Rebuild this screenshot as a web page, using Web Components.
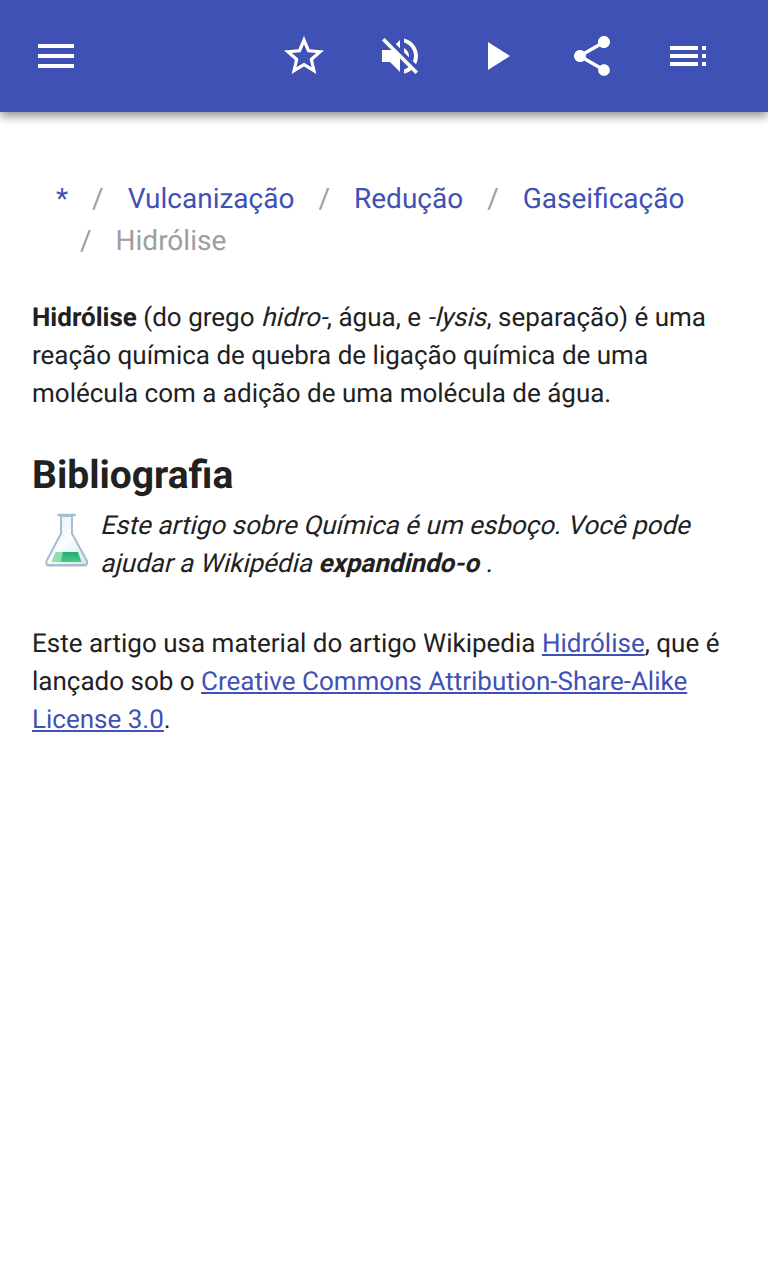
<!DOCTYPE html>
<html lang="pt">
<head>
<meta charset="utf-8">
<title>Hidrólise</title>
<style>
  html, body { margin: 0; background: #fff; }
  body { font-family: Roboto, "Noto Sans", sans-serif; color: #212121; text-rendering: geometricPrecision; }
  b { font-weight: 700; }
</style>
</head>
<body>
<app-page>
  <app-bar>
    <bar-icon slot="start" name="menu"></bar-icon>
    <bar-icon name="star"></bar-icon>
    <bar-icon name="mute"></bar-icon>
    <bar-icon name="play"></bar-icon>
    <bar-icon name="share"></bar-icon>
    <bar-icon name="queue"></bar-icon>
  </app-bar>
  <article-body>
    <bread-crumbs>
      <crumb-item>*</crumb-item>
      <crumb-item>Vulcanização</crumb-item>
      <crumb-item>Redução</crumb-item>
      <crumb-item>Gaseificação</crumb-item>
      <crumb-item active>Hidrólise</crumb-item>
    </bread-crumbs>
    <text-para><b>Hidrólise</b> (do grego <slant-text>hidro-</slant-text>, água, e <slant-text>-lysis</slant-text>, separação) é uma reação química de quebra de ligação química de uma molécula com a adição de uma molécula de água.</text-para>
    <section-title>Bibliografia</section-title>
    <stub-note><slant-text>Este artigo sobre Química é um esboço. Você pode</slant-text> <slant-text>ajudar a Wikipédia <b>expandindo-o</b> .</slant-text></stub-note>
    <text-para>Este artigo usa material do artigo Wikipedia <text-link>Hidrólise</text-link>, que é lançado sob o <text-link>Creative Commons Attribution-Share-Alike License 3.0</text-link>.</text-para>
  </article-body>
</app-page>

<script>
const ICONS = {
  menu: `<path d="M3 18h18v-2H3v2zm0-5h18v-2H3v2zm0-7v2h18V6H3z"/>`,
  star: `<path d="M22 9.24l-7.19-.62L12 2 9.19 8.63 2 9.24l5.46 4.73L5.82 21 12 17.27 18.18 21l-1.63-7.03L22 9.24zM12 15.4l-3.76 2.27 1-4.28-3.32-2.88 4.38-.38L12 6.1l1.71 4.04 4.38.38-3.32 2.88 1 4.28L12 15.4z"/>`,
  mute: `<path d="M16.5 12c0-1.77-1.02-3.29-2.5-4.03v2.21l2.45 2.45c.03-.2.05-.41.05-.63zm2.5 0c0 .94-.2 1.82-.54 2.64l1.51 1.51C20.63 14.91 21 13.5 21 12c0-4.28-2.99-7.86-7-8.77v2.06c2.89.86 5 3.54 5 6.71zM4.27 3L3 4.27 7.73 9H3v6h4l5 5v-6.73l4.25 4.25c-.67.52-1.42.93-2.25 1.18v2.06c1.38-.31 2.63-.95 3.69-1.81L19.73 21 21 19.73l-9-9L4.27 3zM12 4L9.91 6.09 12 8.18V4z"/>`,
  play: `<path d="M8 5v14l11-7z"/>`,
  share: `<path d="M18 16.08c-.76 0-1.44.3-1.96.77L8.91 12.7c.05-.23.09-.46.09-.7s-.04-.47-.09-.7l7.05-4.11c.54.5 1.25.81 2.04.81 1.66 0 3-1.34 3-3s-1.34-3-3-3-3 1.34-3 3c0 .24.04.47.09.7L8.04 9.81C7.5 9.31 6.79 9 6 9c-1.66 0-3 1.34-3 3s1.34 3 3 3c.79 0 1.5-.31 2.04-.81l7.12 4.16c-.05.21-.08.43-.08.65 0 1.61 1.31 2.92 2.92 2.92s2.92-1.31 2.92-2.92-1.31-2.92-2.92-2.92z"/>`,
  queue: `<path d="M3 7h14v2H3zM3 11h14v2H3zM3 15h14v2H3zM19 7h2v2h-2zM19 11h2v2h-2zM19 15h2v2h-2z"/>`
};

class AppPage extends HTMLElement {
  constructor() {
    super();
    this.attachShadow({ mode: "open" }).innerHTML = `
      <style>
        :host { display: flex; flex-direction: column; min-height: 1280px; background: #fff; }
      </style>
      <slot></slot>`;
  }
}

class AppBar extends HTMLElement {
  constructor() {
    super();
    this.attachShadow({ mode: "open" }).innerHTML = `
      <style>
        :host {
          display: flex;
          align-items: center;
          justify-content: space-between;
          height: 112px;
          padding: 0 32px 0 8px;
          background: #3f51b5;
          box-shadow: 0 4px 10px rgba(0, 0, 0, 0.45);
        }
        .actions { display: flex; }
      </style>
      <slot name="start"></slot>
      <div class="actions"><slot></slot></div>`;
  }
}

class BarIcon extends HTMLElement {
  constructor() {
    super();
    this.attachShadow({ mode: "open" });
  }
  connectedCallback() {
    this.shadowRoot.innerHTML = `
      <style>
        :host { display: grid; place-items: center; width: 96px; height: 96px; }
        svg { width: 48px; height: 48px; fill: #fff; display: block; }
      </style>
      <svg viewBox="0 0 24 24">${ICONS[this.getAttribute("name")]}</svg>`;
  }
}

class ArticleBody extends HTMLElement {
  constructor() {
    super();
    this.attachShadow({ mode: "open" }).innerHTML = `
      <style>
        :host { display: block; padding: 66px 32px 0; }
      </style>
      <slot></slot>`;
  }
}

class BreadCrumbs extends HTMLElement {
  constructor() {
    super();
    this.attachShadow({ mode: "open" }).innerHTML = `
      <style>
        :host {
          display: flex;
          flex-wrap: wrap;
          padding: 0 24px;
          margin-bottom: 37px;
        }
      </style>
      <slot></slot>`;
  }
}

class CrumbItem extends HTMLElement {
  constructor() {
    super();
    this.attachShadow({ mode: "open" }).innerHTML = `
      <style>
        :host {
          display: block;
          font-size: 28px;
          line-height: 42px;
          color: #3f51b5;
          padding-left: 24px;
          white-space: nowrap;
        }
        :host(:first-child) { padding-left: 0; }
        :host(:first-child) .sep { display: none; }
        :host([active]) { color: #9e9e9e; }
        .sep { color: #9e9e9e; padding-right: 24px; }
      </style>
      <span class="sep">/</span><slot></slot>`;
  }
}

class TextPara extends HTMLElement {
  constructor() {
    super();
    this.attachShadow({ mode: "open" }).innerHTML = `
      <style>
        :host { display: block; font-size: 26px; line-height: 38px; margin-bottom: 39px; }
      </style>
      <slot></slot>`;
  }
}

// the source has no real italic face, its slant is a plain upright Roboto skewed
class SlantText extends HTMLElement {
  constructor() {
    super();
    this.attachShadow({ mode: "open" }).innerHTML = `
      <style>
        :host {
          display: inline-block;
          white-space: nowrap;
          transform: skewX(-14deg);
          transform-origin: 0 71%;
        }
      </style>
      <slot></slot>`;
  }
}

class SectionTitle extends HTMLElement {
  constructor() {
    super();
    this.attachShadow({ mode: "open" }).innerHTML = `
      <style>
        :host { display: block; font-size: 39px; font-weight: 700; line-height: 46px; margin-bottom: 9px; }
      </style>
      <slot></slot>`;
  }
}

class StubNote extends HTMLElement {
  constructor() {
    super();
    this.attachShadow({ mode: "open" }).innerHTML = `
      <style>
        :host { display: flex; gap: 8px; align-items: flex-start; font-size: 26px; line-height: 38px; margin-bottom: 42px; }
        svg { flex: none; width: 60px; height: 60px; margin-top: 5px; }
      </style>
      <svg viewBox="0 0 60 60">
        <defs>
          <linearGradient id="glass" x1="0" x2="1" y1="0" y2="1">
            <stop offset="0" stop-color="#e0ecf2"/>
            <stop offset=".5" stop-color="#fbfdfe"/>
            <stop offset="1" stop-color="#d5e4eb"/>
          </linearGradient>
          <linearGradient id="liquid" x1="0" x2="0" y1="0" y2="1">
            <stop offset="0" stop-color="#1fb06a"/>
            <stop offset="1" stop-color="#4cc78a"/>
          </linearGradient>
        </defs>
        <path d="M27 53.500H17q-5 0-3-4L28.500 22V4h12v18L55 49.500q2 4-3 4H27z" fill="#000" opacity=".14" transform="translate(0 1.500)"/>
        <path d="M27 53H18q-5 0-3.500-4L29 21.500V4h11v17.500L55 49q1.500 4-3.500 4H27z" fill="url(#glass)" stroke="#a2bfcf" stroke-width="2" stroke-linejoin="round"/>
        <path d="M26.500 3h16" stroke="#a2bfcf" stroke-width="2.500" stroke-linecap="round"/>
        <path d="M24 40h22l3.500 10H19.500z" fill="url(#liquid)"/>
        <path d="M24 40h7l-2.500 10h-9z" fill="#8ee0ae"/>
      </svg>
      <div><slot></slot></div>`;
  }
}

class TextLink extends HTMLElement {
  constructor() {
    super();
    this.attachShadow({ mode: "open" }).innerHTML = `
      <style>
        :host { display: inline; color: #3f51b5; text-decoration: underline; }
      </style>
      <slot></slot>`;
  }
}

customElements.define("app-page", AppPage);
customElements.define("app-bar", AppBar);
customElements.define("bar-icon", BarIcon);
customElements.define("article-body", ArticleBody);
customElements.define("bread-crumbs", BreadCrumbs);
customElements.define("crumb-item", CrumbItem);
customElements.define("text-para", TextPara);
customElements.define("slant-text", SlantText);
customElements.define("section-title", SectionTitle);
customElements.define("stub-note", StubNote);
customElements.define("text-link", TextLink);
</script>
</body>
</html>
